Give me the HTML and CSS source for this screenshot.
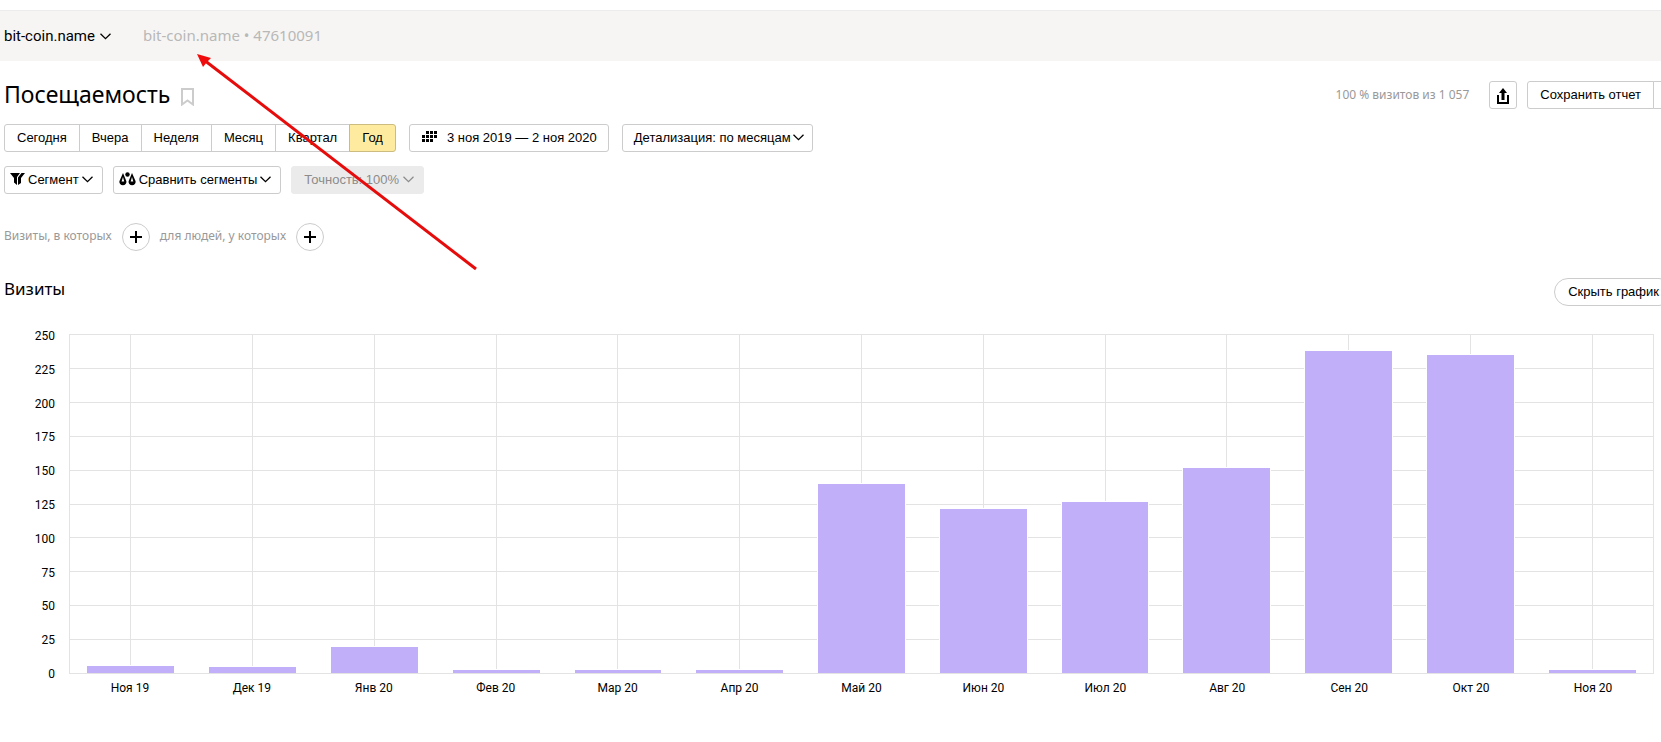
FILE: index.html
```
<!DOCTYPE html>
<html lang="ru">
<head>
    <meta charset="UTF-8">
    <meta name="viewport" content="width=device-width, initial-scale=1.0">
    <title>Посещаемость</title>
    <link rel="stylesheet" href="styles.css">
</head>

<body>
    <header class="topbar">
        <button class="counter-select">
            bit-coin.name
            <svg class="chevron" width="11" height="7" viewBox="0 0 11 7"><path d="M.5 .7 5.5 5.7 10.5 .7"/></svg>
        </button>
        <span class="counter-info">bit-coin.name • 47610091</span>
    </header>

    <main class="page">
        <div class="title-row">
            <h1>Посещаемость</h1>
            <button class="bookmark" aria-label="В избранное">
                <svg width="13" height="18" viewBox="0 0 13 18"><path d="M1 1h11v15.500l-5.500-4-5.500 4z"/></svg>
            </button>
            <span class="sample">100 % визитов из 1 057</span>
            <button class="btn share" aria-label="Экспорт">
                <svg width="14" height="16" viewBox="0 0 14 16"><path d="M7 0 11 5H8.500v7h-3V5H3zM1 7h2v7h8V7h2v9H1z"/></svg>
            </button>
            <div class="group">
                <button class="btn">Сохранить отчет</button>
                <button class="btn save-menu" aria-label="Еще"></button>
            </div>
        </div>

        <div class="row periods">
            <div class="group">
                <button class="btn">Сегодня</button>
                <button class="btn">Вчера</button>
                <button class="btn">Неделя</button>
                <button class="btn">Месяц</button>
                <button class="btn">Квартал</button>
                <button class="btn active">Год</button>
            </div>
            <button class="btn dates">
                <svg width="16" height="12" viewBox="0 0 16 12"><path d="M4 0h3v3H4zM8 0h3v3H8zM12 0h3v3h-3zM0 4h3v3H0zM4 4h3v3H4zM8 4h3v3H8zM12 4h3v3h-3zM0 8h3v3H0zM4 8h3v3H4zM8 8h3v3H8z"/></svg>
                3 ноя 2019 — 2 ноя 2020
            </button>
            <button class="btn detail">
                Детализация: по месяцам
                <svg class="chevron" width="11" height="7" viewBox="0 0 11 7"><path d="M.5 .7 5.500 5.700 10.500 .7"/></svg>
            </button>
        </div>

        <div class="row segments">
            <button class="btn with-icon">
                <svg width="15" height="12" viewBox="0 0 15 12"><path d="M0 0h10L7 4v8L4 9.500V5zM11.500 0H15L11 5v5l-3 2V4.500z"/></svg>
                Сегмент
                <svg class="chevron" width="11" height="7" viewBox="0 0 11 7"><path d="M.5 .7 5.500 5.700 10.500 .7"/></svg>
            </button>
            <button class="btn with-icon">
                <svg width="17" height="14" viewBox="0 0 17 14"><path fill-rule="evenodd" d="M4 1 7.300 9a3.500 3.500 0 1 1-6.800 0zM4 5 2.600 9.500h2.600zM13 1l3.500 8a3.500 3.500 0 1 1-6.800 0zM13 5l-1.300 4.500h2.600z"/><circle cx="8.500" cy="2.500" r="2.200"/></svg>
                Сравнить сегменты
                <svg class="chevron" width="11" height="7" viewBox="0 0 11 7"><path d="M.5 .7 5.500 5.700 10.500 .7"/></svg>
            </button>
            <button class="btn accuracy" disabled>
                Точность: 100%
                <svg class="chevron" width="11" height="7" viewBox="0 0 11 7"><path d="M.5 .7 5.500 5.700 10.500 .7"/></svg>
            </button>
        </div>

        <div class="row conditions">
            <span>Визиты, в которых</span>
            <button class="plus" aria-label="Добавить условие визита">
                <svg width="12" height="12" viewBox="0 0 12 12"><path d="M5 0h2v5h5v2H7v5H5V7H0V5h5z"/></svg>
            </button>
            <span>для людей, у которых</span>
            <button class="plus" aria-label="Добавить условие для людей">
                <svg width="12" height="12" viewBox="0 0 12 12"><path d="M5 0h2v5h5v2H7v5H5V7H0V5h5z"/></svg>
            </button>
        </div>

        <div class="chart-head">
            <h2>Визиты</h2>
            <button class="btn hide-chart">Скрыть график</button>
        </div>
    </main>

    <section class="chart">
        <div class="y-axis" id="y-axis"></div>
        <div class="plot">
            <div class="lines" id="lines"></div>
            <div class="bars" id="bars"></div>
        </div>
        <div class="x-axis" id="x-axis"></div>
    </section>

    <svg class="arrow" width="290" height="225" viewBox="0 0 290 225">
        <path class="arrow-line" d="M9 8 281 217"/>
        <path class="arrow-head" d="M2 2 16 6 12 10 8 15z"/>
    </svg>

    <script>
        const visits = [
            ["Ноя 19", 6], ["Дек 19", 5], ["Янв 20", 20], ["Фев 20", 3], ["Мар 20", 3],
            ["Апр 20", 3], ["Май 20", 140], ["Июн 20", 122], ["Июл 20", 127],
            ["Авг 20", 152], ["Сен 20", 238], ["Окт 20", 235], ["Ноя 20", 3]
        ];
        const max = 250;
        const step = 25;

        const yAxis = document.getElementById("y-axis");
        const lines = document.getElementById("lines");
        const bars = document.getElementById("bars");
        const xAxis = document.getElementById("x-axis");

        for (let value = max; value >= 0; value -= step) {
            const label = document.createElement("span");
            label.textContent = value;
            yAxis.appendChild(label);
            if (value > 0) {
                lines.appendChild(document.createElement("div"));
            }
        }

        visits.forEach(([month, count]) => {
            const column = document.createElement("div");
            column.className = "column";
            const bar = document.createElement("div");
            bar.className = "bar";
            bar.style.height = (count / max * 100) + "%";
            column.appendChild(bar);
            bars.appendChild(column);

            const label = document.createElement("span");
            label.textContent = month;
            xAxis.appendChild(label);
        });
    </script>
</body>
</html>
```
FILE: styles.css
```
* {
    box-sizing: border-box;
}
body {
    margin: 0;
    padding-top: 10px;
    overflow-x: hidden;
    position: relative;
    background: #fff;
    color: #000;
    font-family: "Liberation Sans", Arial, sans-serif;
    font-size: 13px;
}
button {
    font: inherit;
    color: inherit;
    cursor: pointer;
}
.topbar {
    display: flex;
    align-items: center;
    gap: 32px;
    height: 51px;
    padding-left: 4px;
    background: #f6f5f3;
    border-top: 1px solid #ececec;
    font-family: Roboto, sans-serif;
    font-size: 15px;
}
.counter-select {
    display: flex;
    align-items: center;
    gap: 5px;
    padding: 0;
    border: none;
    background: none;
}
.counter-info {
    padding-bottom: 2px;
    color: #b8b8b8;
    font-family: "Noto Sans", sans-serif;
}
.chevron {
    fill: none;
    stroke: currentColor;
    stroke-width: 1.3;
}
.page {
    margin-right: -12px;
    padding-left: 4px;
}
.title-row {
    display: flex;
    align-items: center;
    height: 28px;
    margin-top: 20px;
}
h1 {
    margin: 0;
    padding-bottom: 3px;
    font-family: "Noto Sans", sans-serif;
    font-size: 23px;
    font-weight: normal;
}
.bookmark {
    display: flex;
    margin-left: 11px;
    padding: 4px 0 0;
    border: none;
    background: none;
}
.bookmark svg {
    fill: none;
    stroke: #ccc;
    stroke-width: 2;
}
.sample {
    margin-left: auto;
    padding-bottom: 2px;
    color: #999;
    font-family: "Noto Sans", sans-serif;
    font-size: 12px;
}
.btn {
    display: flex;
    align-items: center;
    height: 28px;
    padding: 0 12px 2px;
    border: 1px solid #ccc;
    border-radius: 3px;
    background: #fff;
    white-space: nowrap;
}
.share {
    justify-content: center;
    width: 28px;
    margin: 0 10px 0 20px;
    padding: 2px 0 0;
}
.group {
    display: flex;
}
.group .btn {
    border-radius: 0;
}
.group .btn + .btn {
    margin-left: -1px;
}
.group .btn:first-child {
    border-radius: 3px 0 0 3px;
}
.group .btn:last-child {
    border-radius: 0 3px 3px 0;
}
.group .active {
    background: #ffeba0;
    border-color: #ccbc80;
}
.group .save-menu {
    width: 20px;
    padding: 0;
}
.row {
    display: flex;
    align-items: center;
}
.periods {
    gap: 13px;
    margin-top: 15px;
}
.dates {
    gap: 9px;
    padding-right: 11px;
}
.detail {
    gap: 2px;
    padding: 0 8px 2px 11px;
}
.segments {
    gap: 10px;
    margin-top: 14px;
}
.with-icon {
    gap: 3px;
    padding: 0 9px 2px 5px;
}
.accuracy {
    gap: 4px;
    padding-right: 9px;
    border-color: #ebebeb;
    background: #ebebeb;
    color: #8c8c8c;
}
.conditions {
    gap: 10px;
    margin-top: 29px;
    color: #999;
    font-family: "Noto Sans", sans-serif;
    font-size: 12px;
}
.conditions span {
    padding-bottom: 4px;
}
.plus {
    display: flex;
    align-items: center;
    justify-content: center;
    width: 28px;
    height: 28px;
    padding: 0;
    border: 1px solid #ccc;
    border-radius: 50%;
    background: #fff;
    color: #000;
}
.chart-head {
    display: flex;
    align-items: center;
    justify-content: space-between;
    height: 28px;
    margin-top: 27px;
}
h2 {
    margin: 0;
    padding-bottom: 8px;
    font-family: "Noto Sans", sans-serif;
    font-size: 17px;
    font-weight: normal;
}
.hide-chart {
    padding: 0 13px 2px;
    border-radius: 14px;
}
.chart {
    display: grid;
    grid-template-columns: 55px 1fr;
    column-gap: 14px;
    margin: 28px 7px 0 0;
    font-family: Roboto, sans-serif;
    font-size: 12px;
}
.y-axis {
    display: flex;
    flex-direction: column;
    justify-content: space-between;
    padding-top: 2px;
    text-align: right;
}
.y-axis span {
    height: 0;
    line-height: 0;
}
.plot {
    display: grid;
    height: 340px;
    border: 1px solid #e3e3e3;
    border-top: none;
}
.lines,
.bars {
    grid-area: 1 / 1;
    display: flex;
}
.lines {
    flex-direction: column;
}
.lines div {
    flex: 1;
    border-top: 1px solid #e3e3e3;
}
.column {
    flex: 1;
    display: flex;
    align-items: flex-end;
    justify-content: center;
    background: linear-gradient(#e3e3e3, #e3e3e3) center / 1px 100% no-repeat;
}
.bar {
    width: 73%;
    border: 1px solid #fff;
    border-bottom: none;
    background: #c2affa;
}
.x-axis {
    grid-column: 2;
    display: flex;
    padding-top: 7px;
    text-align: center;
}
.x-axis span {
    flex: 1;
}
.arrow {
    position: absolute;
    top: 52px;
    left: 195px;
    pointer-events: none;
}
.arrow-line {
    stroke: #e60c0c;
    stroke-width: 3;
}
.arrow-head {
    fill: #f00c0c;
}
```
